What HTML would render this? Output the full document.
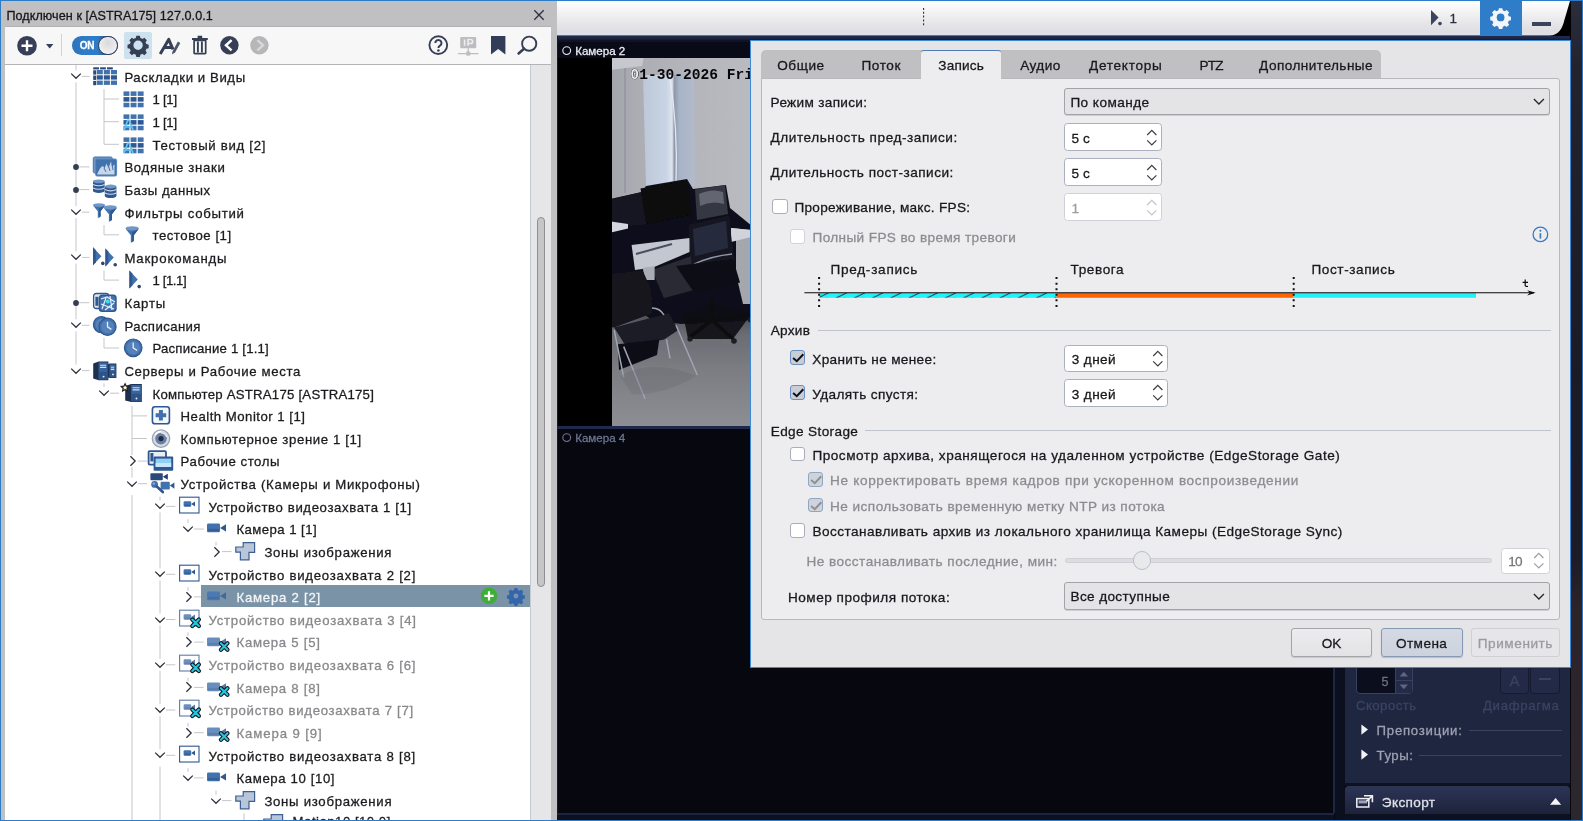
<!DOCTYPE html>
<html><head><meta charset="utf-8"><title>UI</title>
<style>
html,body{margin:0;padding:0;}
body{width:1583px;height:821px;position:relative;overflow:hidden;background:#070812;font-family:"Liberation Sans",sans-serif;}
div,svg,span{position:absolute;box-sizing:border-box;}
.t{white-space:nowrap;display:block;-webkit-text-stroke:0.28px currentColor;}
#root{left:0;top:0;width:1583px;height:821px;will-change:transform;}
svg{overflow:visible;}
</style></head><body><div id="root">
<div style="left:0px;top:0px;width:557px;height:821px;background:#c0c0c2;"></div>
<div style="left:5px;top:27px;width:546px;height:38px;background:#f7f7f8;border-bottom:1px solid #b4b4b8;"></div>
<div style="left:5px;top:26px;width:546px;height:1px;background:#a9a9ac;opacity:.6;"></div>
<div style="left:5px;top:65px;width:526px;height:756px;background:#ffffff;"></div>
<div style="left:530px;top:65px;width:21.4px;height:756px;background:#e6e6e8;border-left:1px solid #c3cad4;"></div>
<div style="left:537px;top:216.5px;width:7.8px;height:370.5px;background:#c6c6c8;border:1px solid #8f8f92;border-radius:4px;"></div>
<span id="t0" class="t" style="left:6.4px;top:5.63px;font-size:12.6px;line-height:20px;color:#15151a;letter-spacing:0.067px;">Подключен к [ASTRA175] 127.0.0.1</span>
<svg style="left:534px;top:10px;" width="10" height="10" viewBox="0 0 10 10"><path d="M0.3 0.3 L9.7 9.7 M9.7 0.3 L0.3 9.7" stroke="#2a2f3e" stroke-width="1.3" fill="none"/></svg>
<svg style="left:17px;top:35.5px;" width="20" height="20" viewBox="0 0 20 20"><circle cx="10" cy="9.8" r="9.8" fill="#363f55"/><path d="M10 4.3v11M4.5 9.8h11" stroke="#fff" stroke-width="2.4"/></svg>
<svg style="left:46px;top:44px;" width="8" height="5" viewBox="0 0 8 5"><path d="M0 0h7.4l-3.7 4.4z" fill="#363f55"/></svg>
<div style="left:61px;top:34px;width:1px;height:22px;background:#d2d2d5;"></div>
<div style="left:72px;top:36px;width:46px;height:18.8px;border-radius:9.4px;background:linear-gradient(90deg,#2d74bd 0%,#2f7cc6 30%,#2f7cc6 55%,#2a5a93 72%,#2a5a93 100%);"></div>
<div style="left:98.4px;top:35.6px;width:19.6px;height:19.6px;border-radius:10px;background:radial-gradient(circle at 50% 35%,#d9d9dd 0%,#ececef 60%,#f8f8fa 100%);border:1.5px solid #363f55;"></div>
<span id="t1" class="t" style="left:79.8px;top:35.73px;font-size:10px;line-height:20px;color:#ffffff;letter-spacing:-0.400px;font-weight:bold;">ON</span>
<div style="left:124px;top:32px;width:28px;height:26.5px;background:#cde2ee;border-radius:2px;"></div>
<svg style="left:124px;top:32px;" width="28" height="27" viewBox="0 0 28 27"><g transform="translate(14.1,13.2) scale(0.92)"><path d="M0 0m-1.9 -10.2h3.8l.6 2.5a7.6 7.6 0 0 1 2.1 .9l2.2-1.4 2.7 2.7-1.4 2.2a7.6 7.6 0 0 1 .9 2.1l2.5 .6v3.8l-2.5 .6a7.6 7.6 0 0 1-.9 2.1l1.4 2.2-2.7 2.7-2.2-1.4a7.6 7.6 0 0 1-2.1 .9l-.6 2.5h-3.8l-.6-2.5a7.6 7.6 0 0 1-2.1-.9l-2.2 1.4-2.7-2.7 1.4-2.2a7.6 7.6 0 0 1-.9-2.1l-2.5-.6v-3.8l2.5-.6a7.6 7.6 0 0 1 .9-2.1l-1.4-2.2 2.7-2.7 2.2 1.4a7.6 7.6 0 0 1 2.1-.9z M0 0m-5.1 0a5.1 5.1 0 1 0 10.2 0a5.1 5.1 0 1 0 -10.2 0z" fill="#363f55" fill-rule="evenodd"/></g></svg>
<svg style="left:158px;top:35px;" width="24" height="20" viewBox="0 0 24 20"><path d="M2.2 18.9 L10.7 4.4 L15 14.4 M5.8 12.4 H14.4" stroke="#363f55" stroke-width="3" fill="none" stroke-linejoin="round"/><path d="M19.9 6.6l2.4 1.3-5.2 9.7-3.1 1.9 .6-3.3z" fill="#4d556b"/></svg>
<svg style="left:192px;top:35.4px;" width="16" height="19.4" viewBox="0 0 16 19.4"><path d="M0 3.1h15.8v1.9H0z M5.6 0.7h4.6v2.2H5.6z" fill="#363f55"/><path d="M2.1 5.4h11.6v12.5a.8 .8 0 0 1-.8 .8H2.9a.8 .8 0 0 1-.8-.8z" fill="none" stroke="#363f55" stroke-width="1.7"/><path d="M5.9 6.5v11M9.9 6.5v11" stroke="#363f55" stroke-width="1.9"/></svg>
<svg style="left:220.2px;top:36px;" width="19" height="19" viewBox="0 0 19 19"><circle cx="9.4" cy="9.3" r="9.2" fill="#363f55"/><path d="M11.6 4.2L6 9.3l5.6 5.1" stroke="#fff" stroke-width="2.5" fill="none" stroke-linejoin="miter"/></svg>
<svg style="left:250.3px;top:36px;" width="19" height="19" viewBox="0 0 19 19"><circle cx="9.4" cy="9.3" r="9.2" fill="#b7b7ba"/><path d="M7.4 4.2L13 9.3l-5.6 5.1" stroke="#d8d8db" stroke-width="2.5" fill="none"/></svg>
<svg style="left:427.5px;top:35px;" width="21" height="21" viewBox="0 0 21 21"><circle cx="10.3" cy="10.1" r="8.9" fill="none" stroke="#363f55" stroke-width="1.9"/><path d="M7.3 8.1a3.1 3.1 0 1 1 4.7 2.6c-1.2 .7-1.6 1.2-1.6 2.4" stroke="#363f55" stroke-width="2" fill="none"/><circle cx="10.4" cy="15.4" r="1.25" fill="#363f55"/></svg>
<svg style="left:457.5px;top:37px;" width="21" height="19" viewBox="0 0 21 19"><rect x="2.2" y="0" width="16" height="11.3" rx="1" fill="#bdbdc0"/><path d="M6.6 2.5v6.3M10 8.8V2.5h2.6a2 2 0 0 1 0 4H10" stroke="#ececee" stroke-width="1.7" fill="none"/><path d="M10.2 11.3v4M0 16.6h20.4" stroke="#bdbdc0" stroke-width="1.3"/><rect x="8.2" y="14.6" width="4" height="4" fill="#bdbdc0"/></svg>
<svg style="left:490.6px;top:36.2px;" width="15" height="19" viewBox="0 0 15 19"><path d="M0 0h14.4v18.6l-7.2-5.6L0 18.6z" fill="#323d5a"/></svg>
<svg style="left:516.5px;top:34.5px;" width="22" height="20" viewBox="0 0 22 20"><circle cx="12.2" cy="8.7" r="7.1" fill="none" stroke="#363f55" stroke-width="1.9"/><path d="M7 13.7L1.6 18.4" stroke="#363f55" stroke-width="2.6" stroke-linecap="round"/></svg>
<svg style="left:0;top:0" width="531" height="821"><g stroke="#c6c6ca" stroke-width="1" fill="none"><path d="M82 76.4H89.5"/><path d="M76 65.0V70.4"/><path d="M76 82.4V87.7"/><path d="M104 99.0H119.0"/><path d="M104 89.2V99.0"/><path d="M104 99.0V110.3"/><path d="M76 87.7V110.3"/><path d="M104 121.7H119.0"/><path d="M104 110.3V121.7"/><path d="M104 121.7V133.0"/><path d="M76 110.3V133.0"/><path d="M104 144.3H119.0"/><path d="M104 133.0V144.3"/><path d="M76 133.0V155.6"/><path d="M79 166.9H89.5"/><path d="M76 155.6V166.9"/><path d="M76 166.9V178.2"/><path d="M79 189.6H89.5"/><path d="M76 178.2V189.6"/><path d="M76 189.6V200.9"/><path d="M82 212.2H89.5"/><path d="M76 200.9V206.2"/><path d="M76 218.2V223.5"/><path d="M104 234.8H119.0"/><path d="M104 225.0V234.8"/><path d="M76 223.5V246.1"/><path d="M82 257.4H89.5"/><path d="M76 246.1V251.4"/><path d="M76 263.4V268.8"/><path d="M104 280.1H119.0"/><path d="M104 270.3V280.1"/><path d="M76 268.8V291.4"/><path d="M79 302.7H89.5"/><path d="M76 291.4V302.7"/><path d="M76 302.7V314.0"/><path d="M82 325.3H89.5"/><path d="M76 314.0V319.3"/><path d="M76 331.3V336.6"/><path d="M104 348.0H119.0"/><path d="M104 338.1V348.0"/><path d="M76 336.6V359.3"/><path d="M82 370.6H89.5"/><path d="M76 359.3V364.6"/><path d="M110 393.2H119.0"/><path d="M104 383.4V387.2"/><path d="M132 415.9H147.0"/><path d="M132 406.0V415.9"/><path d="M132 415.9V427.2"/><path d="M132 438.5H147.0"/><path d="M132 427.2V438.5"/><path d="M132 438.5V449.8"/><path d="M138 461.1H147.0"/><path d="M132 449.8V455.1"/><path d="M132 467.1V472.4"/><path d="M138 483.7H147.0"/><path d="M132 472.4V477.7"/><path d="M166 506.4H175.3"/><path d="M160 496.6V500.4"/><path d="M160 512.4V517.7"/><path d="M132 495.1V517.7"/><path d="M194 529.0H203.7"/><path d="M188 519.2V523.0"/><path d="M132 517.7V540.3"/><path d="M160 517.7V540.3"/><path d="M222 551.6H231.5"/><path d="M216 541.8V545.6"/><path d="M132 540.3V562.9"/><path d="M160 540.3V562.9"/><path d="M166 574.3H175.3"/><path d="M160 562.9V568.3"/><path d="M160 580.3V585.6"/><path d="M132 562.9V585.6"/><path d="M194 596.9H203.7"/><path d="M188 587.1V590.9"/><path d="M132 585.6V608.2"/><path d="M160 585.6V608.2"/><path d="M166 619.5H175.3"/><path d="M160 608.2V613.5"/><path d="M160 625.5V630.8"/><path d="M132 608.2V630.8"/><path d="M194 642.1H203.7"/><path d="M188 632.3V636.1"/><path d="M132 630.8V653.5"/><path d="M160 630.8V653.5"/><path d="M166 664.8H175.3"/><path d="M160 653.5V658.8"/><path d="M160 670.8V676.1"/><path d="M132 653.5V676.1"/><path d="M194 687.4H203.7"/><path d="M188 677.6V681.4"/><path d="M132 676.1V698.7"/><path d="M160 676.1V698.7"/><path d="M166 710.0H175.3"/><path d="M160 698.7V704.0"/><path d="M160 716.0V721.4"/><path d="M132 698.7V721.4"/><path d="M194 732.7H203.7"/><path d="M188 722.9V726.7"/><path d="M132 721.4V744.0"/><path d="M160 721.4V744.0"/><path d="M166 755.3H175.3"/><path d="M160 744.0V749.3"/><path d="M132 744.0V766.6"/><path d="M194 777.9H203.7"/><path d="M188 768.1V771.9"/><path d="M132 766.6V789.2"/><path d="M160 766.6V789.2"/><path d="M222 800.6H231.5"/><path d="M216 790.7V794.6"/><path d="M132 789.2V811.9"/><path d="M160 789.2V811.9"/><path d="M244 823.2H259.7"/><path d="M244 813.4V823.2"/><path d="M132 811.9V834.5"/><path d="M160 811.9V834.5"/></g></svg>
<svg style="left:70px;top:72.4px;" width="12" height="8" viewBox="0 0 12 8"><path d="M1.2 1.6L6 6.3l4.8-4.7" stroke="#2b2f3a" stroke-width="1.25" fill="none"/></svg>
<svg style="left:93px;top:65.80000000000001px;" width="24" height="22" viewBox="0 0 24 22"><rect x="0.2" y="1.3" width="5.8" height="2.1" fill="#2a4a7c"/><rect x="7.1000000000000005" y="1.3" width="5.8" height="2.1" fill="#2a4a7c"/><rect x="14.0" y="1.3" width="5.8" height="2.1" fill="#2a4a7c"/><rect x="0.2" y="4.3" width="2.9" height="4.3" fill="#2a4a7c"/><rect x="0.2" y="9.6" width="2.9" height="4.3" fill="#2a4a7c"/><rect x="0.2" y="14.899999999999999" width="2.9" height="4.3" fill="#2a4a7c"/><rect x="3.7" y="4.0" width="6.1" height="4.3" fill="#4272ad"/><rect x="10.8" y="4.0" width="6.1" height="4.3" fill="#4272ad"/><rect x="17.9" y="4.0" width="6.1" height="4.3" fill="#4272ad"/><rect x="3.7" y="9.3" width="6.1" height="4.3" fill="#2f5790"/><rect x="10.8" y="9.3" width="6.1" height="4.3" fill="#2f5790"/><rect x="17.9" y="9.3" width="6.1" height="4.3" fill="#2f5790"/><rect x="3.7" y="14.6" width="6.1" height="4.3" fill="#4272ad"/><rect x="10.8" y="14.6" width="6.1" height="4.3" fill="#4272ad"/><rect x="17.9" y="14.6" width="6.1" height="4.3" fill="#4272ad"/></svg>
<span id="t2" class="t" style="left:124.4px;top:67.73px;font-size:13.2px;line-height:20px;color:#1b1b1f;letter-spacing:0.575px;">Раскладки и Виды</span>
<svg style="left:122.5px;top:88.43px;" width="24" height="22" viewBox="0 0 24 22"><rect x="0.5" y="3.4" width="5.9" height="4.5" fill="#4272ad"/><rect x="7.6000000000000005" y="3.4" width="5.9" height="4.5" fill="#4272ad"/><rect x="14.700000000000001" y="3.4" width="5.9" height="4.5" fill="#4272ad"/><rect x="0.5" y="9.1" width="5.9" height="4.5" fill="#2f5790"/><rect x="7.6000000000000005" y="9.1" width="5.9" height="4.5" fill="#2f5790"/><rect x="14.700000000000001" y="9.1" width="5.9" height="4.5" fill="#2f5790"/><rect x="0.5" y="14.8" width="5.9" height="4.5" fill="#4272ad"/><rect x="7.6000000000000005" y="14.8" width="5.9" height="4.5" fill="#4272ad"/><rect x="14.700000000000001" y="14.8" width="5.9" height="4.5" fill="#4272ad"/></svg>
<span id="t3" class="t" style="left:152.5px;top:90.36px;font-size:13.2px;line-height:20px;color:#1b1b1f;letter-spacing:-0.274px;">1 [1]</span>
<svg style="left:122.5px;top:111.06px;" width="24" height="22" viewBox="0 0 24 22"><rect x="0.5" y="3.4" width="5.9" height="4.5" fill="#4272ad"/><rect x="7.6000000000000005" y="3.4" width="5.9" height="4.5" fill="#4272ad"/><rect x="14.700000000000001" y="3.4" width="5.9" height="4.5" fill="#4272ad"/><rect x="0.5" y="9.1" width="5.9" height="4.5" fill="#2f5790"/><rect x="7.6000000000000005" y="9.1" width="5.9" height="4.5" fill="#2f5790"/><rect x="14.700000000000001" y="9.1" width="5.9" height="4.5" fill="#2f5790"/><rect x="0.5" y="14.8" width="5.9" height="4.5" fill="#4272ad"/><rect x="7.6000000000000005" y="14.8" width="5.9" height="4.5" fill="#4272ad"/><rect x="14.700000000000001" y="14.8" width="5.9" height="4.5" fill="#4272ad"/><path d="M1 19.3L4.6 9.4h1.8l3.6 9.9M2.6 16h5.8" stroke="#5fc6ee" stroke-width="1.7" fill="none"/></svg>
<span id="t4" class="t" style="left:152.5px;top:112.99px;font-size:13.2px;line-height:20px;color:#1b1b1f;letter-spacing:-0.274px;">1 [1]</span>
<svg style="left:122.5px;top:133.69000000000003px;" width="24" height="22" viewBox="0 0 24 22"><rect x="0.5" y="3.4" width="5.9" height="4.5" fill="#4272ad"/><rect x="7.6000000000000005" y="3.4" width="5.9" height="4.5" fill="#4272ad"/><rect x="14.700000000000001" y="3.4" width="5.9" height="4.5" fill="#4272ad"/><rect x="0.5" y="9.1" width="5.9" height="4.5" fill="#2f5790"/><rect x="7.6000000000000005" y="9.1" width="5.9" height="4.5" fill="#2f5790"/><rect x="14.700000000000001" y="9.1" width="5.9" height="4.5" fill="#2f5790"/><rect x="0.5" y="14.8" width="5.9" height="4.5" fill="#4272ad"/><rect x="7.6000000000000005" y="14.8" width="5.9" height="4.5" fill="#4272ad"/><rect x="14.700000000000001" y="14.8" width="5.9" height="4.5" fill="#4272ad"/><path d="M1 19.3L4.6 9.4h1.8l3.6 9.9M2.6 16h5.8" stroke="#5fc6ee" stroke-width="1.7" fill="none"/></svg>
<span id="t5" class="t" style="left:152.5px;top:135.62px;font-size:13.2px;line-height:20px;color:#1b1b1f;letter-spacing:0.701px;">Тестовый вид [2]</span>
<svg style="left:73px;top:163.92000000000002px;" width="6" height="6" viewBox="0 0 6 6"><circle cx="3" cy="3" r="2.9" fill="#363d50"/></svg>
<svg style="left:93px;top:156.32000000000002px;" width="24" height="22" viewBox="0 0 24 22"><rect x="0.3" y="1" width="19" height="16" rx="1.5" fill="#6f97c8" stroke="#4272ad"/><rect x="2.6" y="3" width="21" height="17" rx="1.5" fill="#4272ad" stroke="#5a86bd" stroke-width="1"/><path d="M4 18.5c2-5 4-8 6-8.5l1.5 2.5 2-5 2 4.5 2.5-6.5 1 5 2.5-2v10z" fill="#dfe7f2" opacity=".85"/><path d="M11 12l2 4M15 9l2 6M19 8l1 6" stroke="#4272ad" stroke-width="1"/></svg>
<span id="t6" class="t" style="left:124.4px;top:158.25px;font-size:13.2px;line-height:20px;color:#1b1b1f;letter-spacing:0.681px;">Водяные знаки</span>
<svg style="left:73px;top:186.55px;" width="6" height="6" viewBox="0 0 6 6"><circle cx="3" cy="3" r="2.9" fill="#363d50"/></svg>
<svg style="left:93px;top:178.95000000000002px;" width="24" height="22" viewBox="0 0 24 22"><g transform="translate(0,0.5)"><rect x="0" y="1.8" width="11.6" height="9.6" fill="#2f5790"/><ellipse cx="5.8" cy="11.4" rx="5.8" ry="2" fill="#2f5790"/><ellipse cx="5.8" cy="1.9" rx="5.8" ry="1.9" fill="#6f97c8"/><path d="M0 5q5.8 2.6 11.6 0M0 8.4q5.8 2.6 11.6 0" stroke="#cfdcee" stroke-width="1.1" fill="none"/></g><g transform="translate(11.8,5.6)"><rect x="0" y="1.8" width="11.6" height="9.6" fill="#2f5790"/><ellipse cx="5.8" cy="11.4" rx="5.8" ry="2" fill="#2f5790"/><ellipse cx="5.8" cy="1.9" rx="5.8" ry="1.9" fill="#6f97c8"/><path d="M0 5q5.8 2.6 11.6 0M0 8.4q5.8 2.6 11.6 0" stroke="#cfdcee" stroke-width="1.1" fill="none"/></g></svg>
<span id="t7" class="t" style="left:124.4px;top:180.88px;font-size:13.2px;line-height:20px;color:#1b1b1f;letter-spacing:0.500px;">Базы данных</span>
<svg style="left:70px;top:208.18px;" width="12" height="8" viewBox="0 0 12 8"><path d="M1.2 1.6L6 6.3l4.8-4.7" stroke="#2b2f3a" stroke-width="1.25" fill="none"/></svg>
<svg style="left:93px;top:201.58px;" width="24" height="22" viewBox="0 0 24 22"><g transform="translate(0,1.2) scale(0.86)"><ellipse cx="7" cy="2.2" rx="7" ry="2.2" fill="#6f97c8"/><path d="M0 2.6 Q7 6 14 2.6 L8.8 9.5 V15.2 L5.6 17.6 V9.5z" fill="#4272ad"/><path d="M7 6v11l1.8-1.4V9.5L14 2.6Q10 5 7 6z" fill="#2f5790"/></g><g transform="translate(10.6,3.2) scale(0.95)"><ellipse cx="7" cy="2.2" rx="7" ry="2.2" fill="#6f97c8"/><path d="M0 2.6 Q7 6 14 2.6 L8.8 9.5 V15.2 L5.6 17.6 V9.5z" fill="#4272ad"/><path d="M7 6v11l1.8-1.4V9.5L14 2.6Q10 5 7 6z" fill="#2f5790"/></g></svg>
<span id="t8" class="t" style="left:124.4px;top:203.51px;font-size:13.2px;line-height:20px;color:#1b1b1f;letter-spacing:0.731px;">Фильтры событий</span>
<svg style="left:122.5px;top:224.21px;" width="24" height="22" viewBox="0 0 24 22"><g transform="translate(2.5,2.2) scale(0.95)"><ellipse cx="7" cy="2.2" rx="7" ry="2.2" fill="#6f97c8"/><path d="M0 2.6 Q7 6 14 2.6 L8.8 9.5 V15.2 L5.6 17.6 V9.5z" fill="#4272ad"/><path d="M7 6v11l1.8-1.4V9.5L14 2.6Q10 5 7 6z" fill="#2f5790"/></g></svg>
<span id="t9" class="t" style="left:152.5px;top:226.14px;font-size:13.2px;line-height:20px;color:#1b1b1f;letter-spacing:0.516px;">тестовое [1]</span>
<svg style="left:70px;top:253.44px;" width="12" height="8" viewBox="0 0 12 8"><path d="M1.2 1.6L6 6.3l4.8-4.7" stroke="#2b2f3a" stroke-width="1.25" fill="none"/></svg>
<svg style="left:93px;top:246.84px;" width="24" height="22" viewBox="0 0 24 22"><path d="M0 0.2l8.4 9-8.4 9z" fill="#4272ad"/><path d="M0 0.2l2.8 3v12l-2.8 3z" fill="#2f5790"/><circle cx="9.8" cy="16.4" r="1.8" fill="#33466a"/><path d="M12.4 1.6l8.4 9-8.4 9z" fill="#4272ad"/><path d="M12.4 1.6l2.8 3v12l-2.8 3z" fill="#2f5790"/><circle cx="22.200000000000003" cy="17.8" r="1.8" fill="#33466a"/></svg>
<span id="t10" class="t" style="left:124.4px;top:248.77px;font-size:13.2px;line-height:20px;color:#1b1b1f;letter-spacing:0.832px;">Макрокоманды</span>
<svg style="left:122.5px;top:269.46999999999997px;" width="24" height="22" viewBox="0 0 24 22"><path d="M6.4 1.4l8.4 9-8.4 9z" fill="#4272ad"/><path d="M6.4 1.4l2.8 3v12l-2.8 3z" fill="#2f5790"/><circle cx="16.200000000000003" cy="17.599999999999998" r="1.8" fill="#33466a"/></svg>
<span id="t11" class="t" style="left:152.5px;top:271.40px;font-size:13.2px;line-height:20px;color:#1b1b1f;letter-spacing:-0.410px;">1 [1.1]</span>
<svg style="left:73px;top:299.7px;" width="6" height="6" viewBox="0 0 6 6"><circle cx="3" cy="3" r="2.9" fill="#363d50"/></svg>
<svg style="left:93px;top:292.09999999999997px;" width="24" height="22" viewBox="0 0 24 22"><rect x="0.6" y="1.5" width="15" height="15" rx="2.5" fill="#dfe7f2" stroke="#2f5790" stroke-width="1.3"/><rect x="2.4" y="4.8" width="3" height="9" fill="#2f5790"/><rect x="6.4" y="3.2" width="16.6" height="16.2" rx="2.8" fill="#4272ad" stroke="#2f5790" stroke-width="1.4"/><path d="M8 7l6-2 8 5M9 17l4-11M12 18l9-7M8 12l13 5M17 4l2 14" stroke="#e9eff7" stroke-width="1.2" fill="none"/><circle cx="14.8" cy="9.6" r="2" fill="#3fe0f5"/></svg>
<span id="t12" class="t" style="left:124.4px;top:294.03px;font-size:13.2px;line-height:20px;color:#1b1b1f;letter-spacing:0.821px;">Карты</span>
<svg style="left:70px;top:321.33px;" width="12" height="8" viewBox="0 0 12 8"><path d="M1.2 1.6L6 6.3l4.8-4.7" stroke="#2b2f3a" stroke-width="1.25" fill="none"/></svg>
<svg style="left:93px;top:314.72999999999996px;" width="24" height="22" viewBox="0 0 24 22"><circle cx="8.4" cy="9.6" r="8" fill="#4272ad" stroke="#2f5790" stroke-width="1.2"/><circle cx="8.4" cy="9.6" r="5.8" fill="#5d88bd" opacity=".7"/><path d="M8.4 5.1V9.6l3.6 2.4" stroke="#e8eef6" stroke-width="1.3" fill="none"/><circle cx="14.5" cy="11.8" r="8.6" fill="#4272ad" stroke="#2f5790" stroke-width="1.2"/><circle cx="14.5" cy="11.8" r="6.3999999999999995" fill="#5d88bd" opacity=".7"/><path d="M14.5 6.700000000000001V11.8l3.87 2.5799999999999996" stroke="#e8eef6" stroke-width="1.3" fill="none"/></svg>
<span id="t13" class="t" style="left:124.4px;top:316.66px;font-size:13.2px;line-height:20px;color:#1b1b1f;letter-spacing:0.398px;">Расписания</span>
<svg style="left:122.5px;top:337.36px;" width="24" height="22" viewBox="0 0 24 22"><circle cx="10.2" cy="10.8" r="8.8" fill="#4272ad" stroke="#2f5790" stroke-width="1.2"/><circle cx="10.2" cy="10.8" r="6.6000000000000005" fill="#5d88bd" opacity=".7"/><path d="M10.2 5.5V10.8l3.9600000000000004 2.64" stroke="#e8eef6" stroke-width="1.3" fill="none"/></svg>
<span id="t14" class="t" style="left:152.5px;top:339.29px;font-size:13.2px;line-height:20px;color:#1b1b1f;letter-spacing:0.187px;">Расписание 1 [1.1]</span>
<svg style="left:70px;top:366.59000000000003px;" width="12" height="8" viewBox="0 0 12 8"><path d="M1.2 1.6L6 6.3l4.8-4.7" stroke="#2b2f3a" stroke-width="1.25" fill="none"/></svg>
<svg style="left:93px;top:359.99px;" width="24" height="22" viewBox="0 0 24 22"><path d="M12.6 5.6L16.488 3.4H23.4V18.0H16.488L12.6 16.4z" fill="#1e3050"/><rect x="16.488" y="4.4" width="6.112000000000001" height="12.799999999999999" fill="#38649e"/><rect x="16.488" y="11.430000000000001" width="6.112000000000001" height="5.7700000000000005" fill="#2d5489"/><path d="M17.887999999999998 7.199999999999999h3.3120000000000007M17.887999999999998 9.4h3.3120000000000007" stroke="#d3dff0" stroke-width="1.1"/><circle cx="19.944000000000003" cy="14.4" r="0.95" fill="#e4ecf7"/><path d="M0.2 3.6L5.672 1.4H15.399999999999999V20.2H5.672L0.2 18.599999999999998z" fill="#1e3050"/><rect x="5.672" y="2.4" width="8.927999999999999" height="17.0" fill="#38649e"/><rect x="5.672" y="11.740000000000002" width="8.927999999999999" height="7.660000000000001" fill="#2d5489"/><path d="M7.071999999999999 5.199999999999999h6.128M7.071999999999999 7.4h6.128" stroke="#d3dff0" stroke-width="1.1"/><circle cx="10.536" cy="16.599999999999998" r="0.95" fill="#e4ecf7"/></svg>
<span id="t15" class="t" style="left:124.4px;top:361.92px;font-size:13.2px;line-height:20px;color:#1b1b1f;letter-spacing:0.650px;">Серверы и Рабочие места</span>
<svg style="left:98px;top:389.22px;" width="12" height="8" viewBox="0 0 12 8"><path d="M1.2 1.6L6 6.3l4.8-4.7" stroke="#2b2f3a" stroke-width="1.25" fill="none"/></svg>
<svg style="left:122.5px;top:382.62px;" width="24" height="22" viewBox="0 0 24 22"><path d="M2.2 3.1L8.176 0.9H18.8V19.099999999999998H8.176L2.2 17.499999999999996z" fill="#1e3050"/><rect x="8.176" y="1.9" width="9.824" height="16.4" fill="#38649e"/><rect x="8.176" y="10.91" width="9.824" height="7.39" fill="#2d5489"/><path d="M9.576 4.7h7.024000000000001M9.576 6.9h7.024000000000001" stroke="#d3dff0" stroke-width="1.1"/><circle cx="13.488000000000003" cy="15.499999999999998" r="0.95" fill="#e4ecf7"/><g transform="translate(-1.6,0.6) scale(0.8)"><path d="M4.6 0.2l1.5 3 3.3.4-2.4 2.3.6 3.3-3-1.6-3 1.6.6-3.3L-.2 3.6l3.3-.4z" fill="#ffd9a0" stroke="#1c1f28" stroke-width="1.5"/><circle cx="4.6" cy="5" r="1.3" fill="#fff"/></g></svg>
<span id="t16" class="t" style="left:152.5px;top:384.55px;font-size:13.2px;line-height:20px;color:#1b1b1f;letter-spacing:0.232px;">Компьютер ASTRA175 [ASTRA175]</span>
<svg style="left:150.5px;top:405.25px;" width="24" height="22" viewBox="0 0 24 22"><rect x="1.4" y="1.8" width="17" height="17" rx="2.6" fill="#f4f7fb" stroke="#2f5790" stroke-width="1.6"/><path d="M9.9 5v10.6M4.6 10.3h10.6" stroke="#4272ad" stroke-width="4"/></svg>
<span id="t17" class="t" style="left:180.6px;top:407.18px;font-size:13.2px;line-height:20px;color:#1b1b1f;letter-spacing:0.485px;">Health Monitor 1 [1]</span>
<svg style="left:150.5px;top:427.88px;" width="24" height="22" viewBox="0 0 24 22"><circle cx="10" cy="10.6" r="8.7" fill="#d8dbe2" stroke="#9aa3b4" stroke-width="1.3"/><circle cx="10" cy="10.6" r="5.8" fill="#6a7fa6"/><circle cx="10" cy="10.6" r="2.6" fill="#1f2c47"/><path d="M10 4.8a5.8 5.8 0 0 1 5.6 4.4" stroke="#e9edf4" stroke-width="1.2" fill="none"/><path d="M4.2 6.8a7 7 0 0 1 6-3.2" stroke="#fff" stroke-width="1.5" fill="none"/></svg>
<span id="t18" class="t" style="left:180.6px;top:429.81px;font-size:13.2px;line-height:20px;color:#1b1b1f;letter-spacing:0.608px;">Компьютерное зрение 1 [1]</span>
<svg style="left:128.5px;top:455.11px;" width="8" height="12" viewBox="0 0 8 12"><path d="M1.4 1.2L6.2 6l-4.8 4.8" stroke="#2b2f3a" stroke-width="1.25" fill="none"/></svg>
<svg style="left:150.5px;top:450.51px;" width="24" height="22" viewBox="0 0 24 22"><rect x="-2.4" y="0.2" width="17.4" height="13.4" rx="1" fill="#e9eef5" stroke="#2f5790" stroke-width="1.8"/><rect x="-0.6" y="2" width="3" height="8.4" fill="#2f5790"/><rect x="2.6" y="5.6" width="19.6" height="14.2" rx="1" fill="#2f5790"/><rect x="4.6" y="7.6" width="15.6" height="8.4" fill="#8fd0f4"/><rect x="4.6" y="12" width="15.6" height="4" fill="#c7e8fb"/></svg>
<span id="t19" class="t" style="left:180.6px;top:452.44px;font-size:13.2px;line-height:20px;color:#1b1b1f;letter-spacing:0.551px;">Рабочие столы</span>
<svg style="left:126px;top:479.74px;" width="12" height="8" viewBox="0 0 12 8"><path d="M1.2 1.6L6 6.3l4.8-4.7" stroke="#2b2f3a" stroke-width="1.25" fill="none"/></svg>
<svg style="left:150.5px;top:473.14px;" width="24" height="22" viewBox="0 0 24 22"><rect x="-0.6" y="0.2" width="12.4" height="7" rx="1" fill="#2a4a7c"/><path d="M11.8 3.7l5-3v6z" fill="#223e6c"/><rect x="9.6" y="8.8" width="9.2" height="7.6" rx="1" fill="#4272ad"/><path d="M18.8 12.6l4.6-3.2v6.4z" fill="#2f5790"/><circle cx="3.6" cy="11.4" r="3.4" fill="#4272ad"/><circle cx="2.8" cy="10.6" r="1.2" fill="#8fb0da"/><path d="M5.8 13.6l6 5.4" stroke="#2f5790" stroke-width="2.7" stroke-linecap="round"/></svg>
<span id="t20" class="t" style="left:180.6px;top:475.07px;font-size:13.2px;line-height:20px;color:#1b1b1f;letter-spacing:0.703px;">Устройства (Камеры и Микрофоны)</span>
<svg style="left:154px;top:502.37px;" width="12" height="8" viewBox="0 0 12 8"><path d="M1.2 1.6L6 6.3l4.8-4.7" stroke="#2b2f3a" stroke-width="1.25" fill="none"/></svg>
<svg style="left:178.8px;top:495.77px;" width="24" height="22" viewBox="0 0 24 22"><rect x="0.6" y="1.2" width="19.4" height="15.8" fill="#fff" stroke="#2f5790" stroke-width="1.1"/><rect x="4.6" y="5.2" width="7.6" height="5.6" rx="1.2" fill="#4272ad"/><path d="M12.2 8l3.8-2.4v4.8z" fill="#2f5790"/><rect x="5.6" y="8.6" width="5.6" height="1.6" fill="#2f5790" opacity=".7"/></svg>
<span id="t21" class="t" style="left:208.4px;top:497.70px;font-size:13.2px;line-height:20px;color:#1b1b1f;letter-spacing:0.611px;">Устройство видеозахвата 1 [1]</span>
<svg style="left:182px;top:525.0px;" width="12" height="8" viewBox="0 0 12 8"><path d="M1.2 1.6L6 6.3l4.8-4.7" stroke="#2b2f3a" stroke-width="1.25" fill="none"/></svg>
<svg style="left:207.2px;top:518.4px;" width="24" height="22" viewBox="0 0 24 22"><rect x="0" y="5.6" width="13" height="8.6" rx="1.2" fill="#4272ad"/><path d="M13 9.899999999999999l6-3.6v7.2z" fill="#2f5790"/><rect x="1" y="10.899999999999999" width="11" height="2.3" fill="#2f5790" opacity=".7"/></svg>
<span id="t22" class="t" style="left:236.5px;top:520.33px;font-size:13.2px;line-height:20px;color:#1b1b1f;letter-spacing:0.423px;">Камера 1 [1]</span>
<svg style="left:212.5px;top:545.63px;" width="8" height="12" viewBox="0 0 8 12"><path d="M1.4 1.2L6.2 6l-4.8 4.8" stroke="#2b2f3a" stroke-width="1.25" fill="none"/></svg>
<svg style="left:235px;top:541.03px;" width="24" height="22" viewBox="0 0 24 22"><path d="M8.2 1.6h11.4v9.8h-5.6v7.4H5.4v-7.6H0.8V6h7.4z" fill="#b7c6d8" stroke="#3e5f8f" stroke-width="1.2"/></svg>
<span id="t23" class="t" style="left:264.4px;top:542.96px;font-size:13.2px;line-height:20px;color:#1b1b1f;letter-spacing:0.706px;">Зоны изображения</span>
<svg style="left:154px;top:570.26px;" width="12" height="8" viewBox="0 0 12 8"><path d="M1.2 1.6L6 6.3l4.8-4.7" stroke="#2b2f3a" stroke-width="1.25" fill="none"/></svg>
<svg style="left:178.8px;top:563.66px;" width="24" height="22" viewBox="0 0 24 22"><rect x="0.6" y="1.2" width="19.4" height="15.8" fill="#fff" stroke="#2f5790" stroke-width="1.1"/><rect x="4.6" y="5.2" width="7.6" height="5.6" rx="1.2" fill="#4272ad"/><path d="M12.2 8l3.8-2.4v4.8z" fill="#2f5790"/><rect x="5.6" y="8.6" width="5.6" height="1.6" fill="#2f5790" opacity=".7"/></svg>
<span id="t24" class="t" style="left:208.4px;top:565.59px;font-size:13.2px;line-height:20px;color:#1b1b1f;letter-spacing:0.760px;">Устройство видеозахвата 2 [2]</span>
<div style="left:201.2px;top:585.3px;width:328.8px;height:21.4px;background:#7b93a6;"></div>
<svg style="left:184.5px;top:590.89px;" width="8" height="12" viewBox="0 0 8 12"><path d="M1.4 1.2L6.2 6l-4.8 4.8" stroke="#2b2f3a" stroke-width="1.25" fill="none"/></svg>
<svg style="left:207.2px;top:586.29px;" width="24" height="22" viewBox="0 0 24 22"><rect x="0" y="5.6" width="13" height="8.6" rx="1.2" fill="#4d79b0"/><path d="M13 9.899999999999999l6-3.6v7.2z" fill="#3f69a2"/><rect x="1" y="10.899999999999999" width="11" height="2.3" fill="#3f69a2" opacity=".7"/></svg>
<span id="t25" class="t" style="left:236.5px;top:588.22px;font-size:13.2px;line-height:20px;color:#f4f6f8;letter-spacing:0.748px;">Камера 2 [2]</span>
<svg style="left:154px;top:615.52px;" width="12" height="8" viewBox="0 0 12 8"><path d="M1.2 1.6L6 6.3l4.8-4.7" stroke="#2b2f3a" stroke-width="1.25" fill="none"/></svg>
<svg style="left:178.8px;top:608.92px;" width="24" height="22" viewBox="0 0 24 22"><g opacity=".78"><rect x="0.6" y="1.2" width="19.4" height="15.8" fill="#fff" stroke="#2f5790" stroke-width="1.1"/><rect x="4.6" y="5.2" width="7.6" height="5.6" rx="1.2" fill="#4272ad"/><path d="M12.2 8l3.8-2.4v4.8z" fill="#2f5790"/><rect x="5.6" y="8.6" width="5.6" height="1.6" fill="#2f5790" opacity=".7"/></g><path d="M13.3 10.5l6.6 6.6M19.9 10.5l-6.6 6.6" stroke="#10151c" stroke-width="4.2" stroke-linecap="round"/><path d="M13.3 10.5l6.6 6.6M19.9 10.5l-6.6 6.6" stroke="#25c6de" stroke-width="2.1" stroke-linecap="round"/></svg>
<span id="t26" class="t" style="left:208.4px;top:610.85px;font-size:13.2px;line-height:20px;color:#88888c;letter-spacing:0.784px;">Устройство видеозахвата 3 [4]</span>
<svg style="left:184.5px;top:636.15px;" width="8" height="12" viewBox="0 0 8 12"><path d="M1.4 1.2L6.2 6l-4.8 4.8" stroke="#2b2f3a" stroke-width="1.25" fill="none"/></svg>
<svg style="left:207.2px;top:631.55px;" width="24" height="22" viewBox="0 0 24 22"><g opacity=".8"><rect x="0" y="5.6" width="13" height="8.6" rx="1.2" fill="#4272ad"/><path d="M13 9.899999999999999l6-3.6v7.2z" fill="#2f5790"/><rect x="1" y="10.899999999999999" width="11" height="2.3" fill="#2f5790" opacity=".7"/></g><path d="M13.9 11.2l6.6 6.6M20.5 11.2l-6.6 6.6" stroke="#10151c" stroke-width="4.2" stroke-linecap="round"/><path d="M13.9 11.2l6.6 6.6M20.5 11.2l-6.6 6.6" stroke="#25c6de" stroke-width="2.1" stroke-linecap="round"/></svg>
<span id="t27" class="t" style="left:236.5px;top:633.48px;font-size:13.2px;line-height:20px;color:#88888c;letter-spacing:0.723px;">Камера 5 [5]</span>
<svg style="left:154px;top:660.78px;" width="12" height="8" viewBox="0 0 12 8"><path d="M1.2 1.6L6 6.3l4.8-4.7" stroke="#2b2f3a" stroke-width="1.25" fill="none"/></svg>
<svg style="left:178.8px;top:654.18px;" width="24" height="22" viewBox="0 0 24 22"><g opacity=".78"><rect x="0.6" y="1.2" width="19.4" height="15.8" fill="#fff" stroke="#2f5790" stroke-width="1.1"/><rect x="4.6" y="5.2" width="7.6" height="5.6" rx="1.2" fill="#4272ad"/><path d="M12.2 8l3.8-2.4v4.8z" fill="#2f5790"/><rect x="5.6" y="8.6" width="5.6" height="1.6" fill="#2f5790" opacity=".7"/></g><path d="M13.3 10.5l6.6 6.6M19.9 10.5l-6.6 6.6" stroke="#10151c" stroke-width="4.2" stroke-linecap="round"/><path d="M13.3 10.5l6.6 6.6M19.9 10.5l-6.6 6.6" stroke="#25c6de" stroke-width="2.1" stroke-linecap="round"/></svg>
<span id="t28" class="t" style="left:208.4px;top:656.11px;font-size:13.2px;line-height:20px;color:#88888c;letter-spacing:0.763px;">Устройство видеозахвата 6 [6]</span>
<svg style="left:184.5px;top:681.41px;" width="8" height="12" viewBox="0 0 8 12"><path d="M1.4 1.2L6.2 6l-4.8 4.8" stroke="#2b2f3a" stroke-width="1.25" fill="none"/></svg>
<svg style="left:207.2px;top:676.81px;" width="24" height="22" viewBox="0 0 24 22"><g opacity=".8"><rect x="0" y="5.6" width="13" height="8.6" rx="1.2" fill="#4272ad"/><path d="M13 9.899999999999999l6-3.6v7.2z" fill="#2f5790"/><rect x="1" y="10.899999999999999" width="11" height="2.3" fill="#2f5790" opacity=".7"/></g><path d="M13.9 11.2l6.6 6.6M20.5 11.2l-6.6 6.6" stroke="#10151c" stroke-width="4.2" stroke-linecap="round"/><path d="M13.9 11.2l6.6 6.6M20.5 11.2l-6.6 6.6" stroke="#25c6de" stroke-width="2.1" stroke-linecap="round"/></svg>
<span id="t29" class="t" style="left:236.5px;top:678.74px;font-size:13.2px;line-height:20px;color:#88888c;letter-spacing:0.723px;">Камера 8 [8]</span>
<svg style="left:154px;top:706.04px;" width="12" height="8" viewBox="0 0 12 8"><path d="M1.2 1.6L6 6.3l4.8-4.7" stroke="#2b2f3a" stroke-width="1.25" fill="none"/></svg>
<svg style="left:178.8px;top:699.4399999999999px;" width="24" height="22" viewBox="0 0 24 22"><g opacity=".78"><rect x="0.6" y="1.2" width="19.4" height="15.8" fill="#fff" stroke="#2f5790" stroke-width="1.1"/><rect x="4.6" y="5.2" width="7.6" height="5.6" rx="1.2" fill="#4272ad"/><path d="M12.2 8l3.8-2.4v4.8z" fill="#2f5790"/><rect x="5.6" y="8.6" width="5.6" height="1.6" fill="#2f5790" opacity=".7"/></g><path d="M13.3 10.5l6.6 6.6M19.9 10.5l-6.6 6.6" stroke="#10151c" stroke-width="4.2" stroke-linecap="round"/><path d="M13.3 10.5l6.6 6.6M19.9 10.5l-6.6 6.6" stroke="#25c6de" stroke-width="2.1" stroke-linecap="round"/></svg>
<span id="t30" class="t" style="left:208.4px;top:701.37px;font-size:13.2px;line-height:20px;color:#88888c;letter-spacing:0.680px;">Устройство видеозахвата 7 [7]</span>
<svg style="left:184.5px;top:726.67px;" width="8" height="12" viewBox="0 0 8 12"><path d="M1.4 1.2L6.2 6l-4.8 4.8" stroke="#2b2f3a" stroke-width="1.25" fill="none"/></svg>
<svg style="left:207.2px;top:722.0699999999999px;" width="24" height="22" viewBox="0 0 24 22"><g opacity=".8"><rect x="0" y="5.6" width="13" height="8.6" rx="1.2" fill="#4272ad"/><path d="M13 9.899999999999999l6-3.6v7.2z" fill="#2f5790"/><rect x="1" y="10.899999999999999" width="11" height="2.3" fill="#2f5790" opacity=".7"/></g><path d="M13.9 11.2l6.6 6.6M20.5 11.2l-6.6 6.6" stroke="#10151c" stroke-width="4.2" stroke-linecap="round"/><path d="M13.9 11.2l6.6 6.6M20.5 11.2l-6.6 6.6" stroke="#25c6de" stroke-width="2.1" stroke-linecap="round"/></svg>
<span id="t31" class="t" style="left:236.5px;top:724.00px;font-size:13.2px;line-height:20px;color:#88888c;letter-spacing:0.882px;">Камера 9 [9]</span>
<svg style="left:154px;top:751.3px;" width="12" height="8" viewBox="0 0 12 8"><path d="M1.2 1.6L6 6.3l4.8-4.7" stroke="#2b2f3a" stroke-width="1.25" fill="none"/></svg>
<svg style="left:178.8px;top:744.6999999999999px;" width="24" height="22" viewBox="0 0 24 22"><rect x="0.6" y="1.2" width="19.4" height="15.8" fill="#fff" stroke="#2f5790" stroke-width="1.1"/><rect x="4.6" y="5.2" width="7.6" height="5.6" rx="1.2" fill="#4272ad"/><path d="M12.2 8l3.8-2.4v4.8z" fill="#2f5790"/><rect x="5.6" y="8.6" width="5.6" height="1.6" fill="#2f5790" opacity=".7"/></svg>
<span id="t32" class="t" style="left:208.4px;top:746.63px;font-size:13.2px;line-height:20px;color:#1b1b1f;letter-spacing:0.753px;">Устройство видеозахвата 8 [8]</span>
<svg style="left:182px;top:773.93px;" width="12" height="8" viewBox="0 0 12 8"><path d="M1.2 1.6L6 6.3l4.8-4.7" stroke="#2b2f3a" stroke-width="1.25" fill="none"/></svg>
<svg style="left:207.2px;top:767.3299999999999px;" width="24" height="22" viewBox="0 0 24 22"><rect x="0" y="5.6" width="13" height="8.6" rx="1.2" fill="#4272ad"/><path d="M13 9.899999999999999l6-3.6v7.2z" fill="#2f5790"/><rect x="1" y="10.899999999999999" width="11" height="2.3" fill="#2f5790" opacity=".7"/></svg>
<span id="t33" class="t" style="left:236.5px;top:769.26px;font-size:13.2px;line-height:20px;color:#1b1b1f;letter-spacing:0.609px;">Камера 10 [10]</span>
<svg style="left:210px;top:796.56px;" width="12" height="8" viewBox="0 0 12 8"><path d="M1.2 1.6L6 6.3l4.8-4.7" stroke="#2b2f3a" stroke-width="1.25" fill="none"/></svg>
<svg style="left:235px;top:789.9599999999999px;" width="24" height="22" viewBox="0 0 24 22"><path d="M8.2 1.6h11.4v9.8h-5.6v7.4H5.4v-7.6H0.8V6h7.4z" fill="#b7c6d8" stroke="#3e5f8f" stroke-width="1.2"/></svg>
<span id="t34" class="t" style="left:264.4px;top:791.89px;font-size:13.2px;line-height:20px;color:#1b1b1f;letter-spacing:0.713px;">Зоны изображения</span>
<svg style="left:263.2px;top:812.5899999999999px;" width="24" height="22" viewBox="0 0 24 22"><path d="M8.2 1.6h11.4v9.8h-5.6v7.4H5.4v-7.6H0.8V6h7.4z" fill="#b7c6d8" stroke="#3e5f8f" stroke-width="1.2"/></svg>
<span id="t35" class="t" style="left:292.6px;top:812.32px;font-size:13.2px;line-height:20px;color:#1b1b1f;letter-spacing:0.488px;">Motion10 [10.0]</span>
<svg style="left:480px;top:587.4px;" width="18" height="18" viewBox="0 0 18 18"><circle cx="9" cy="8.8" r="8.3" fill="#3fae36"/><path d="M9 4.2v9.2M4.4 8.8h9.2" stroke="#fff" stroke-width="2.2"/></svg>
<svg style="left:506px;top:586px;" width="20" height="20" viewBox="0 0 20 20"><g transform="translate(9.9,10) scale(0.78)"><path d="M0 0m-1.9 -10.2h3.8l.6 2.5a7.6 7.6 0 0 1 2.1 .9l2.2-1.4 2.7 2.7-1.4 2.2a7.6 7.6 0 0 1 .9 2.1l2.5 .6v3.8l-2.5 .6a7.6 7.6 0 0 1-.9 2.1l1.4 2.2-2.7 2.7-2.2-1.4a7.6 7.6 0 0 1-2.1 .9l-.6 2.5h-3.8l-.6-2.5a7.6 7.6 0 0 1-2.1-.9l-2.2 1.4-2.7-2.7 1.4-2.2a7.6 7.6 0 0 1-.9-2.1l-2.5-.6v-3.8l2.5-.6a7.6 7.6 0 0 1 .9-2.1l-1.4-2.2 2.7-2.7 2.2 1.4a7.6 7.6 0 0 1 2.1-.9z M0 0m-3.1 0a3.1 3.1 0 1 0 6.2 0a3.1 3.1 0 1 0 -6.2 0z" fill="#3566ab" fill-rule="evenodd"/></g></svg>
<div style="left:557px;top:0px;width:1026px;height:821px;background:#06070f;"></div>
<svg style="left:557px;top:0" width="1026" height="37" viewBox="557 0 1026 37"><defs><linearGradient id="tbg" x1="0" y1="0" x2="0" y2="1"><stop offset="0" stop-color="#ffffff"/><stop offset=".3" stop-color="#f4f4f5"/><stop offset=".65" stop-color="#e6e5e8"/><stop offset=".85" stop-color="#dfdfe4"/><stop offset="1" stop-color="#dde1ea"/></linearGradient></defs><rect x="557" y="0" width="1026" height="37" fill="#000"/><path d="M557 1H1570 L1564.4 20 C1562.5 28 1559 35.6 1549 35.6 H557z" fill="url(#tbg)"/><path d="M923.6 8v18" stroke="#2a2f45" stroke-width="1.1" stroke-dasharray="2 1.8"/></svg>
<svg style="left:1430.6px;top:10.2px;" width="12" height="16" viewBox="0 0 12 16"><path d="M0 0l7.6 7.6L0 15.2z" fill="#3a445c"/><circle cx="9" cy="13.6" r="1.8" fill="#3a445c"/></svg>
<span id="t36" class="t" style="left:1449.6px;top:8.56px;font-size:13.4px;line-height:20px;color:#2c3144;letter-spacing:0.000px;">1</span>
<div style="left:1480px;top:1px;width:41.8px;height:34.6px;background:#2f7dc8;"></div>
<svg style="left:1480px;top:1px;" width="42" height="35" viewBox="0 0 42 35"><g transform="translate(20.6,16.4) scale(0.9)"><path d="M0 0m-1.9 -10.2h3.8l.6 2.5a7.6 7.6 0 0 1 2.1 .9l2.2-1.4 2.7 2.7-1.4 2.2a7.6 7.6 0 0 1 .9 2.1l2.5 .6v3.8l-2.5 .6a7.6 7.6 0 0 1-.9 2.1l1.4 2.2-2.7 2.7-2.2-1.4a7.6 7.6 0 0 1-2.1 .9l-.6 2.5h-3.8l-.6-2.5a7.6 7.6 0 0 1-2.1-.9l-2.2 1.4-2.7-2.7 1.4-2.2a7.6 7.6 0 0 1-.9-2.1l-2.5-.6v-3.8l2.5-.6a7.6 7.6 0 0 1 .9-2.1l-1.4-2.2 2.7-2.7 2.2 1.4a7.6 7.6 0 0 1 2.1-.9z M0 0m-4.3 0a4.3 4.3 0 1 0 8.6 0a4.3 4.3 0 1 0 -8.6 0z" fill="#f4f6f9" fill-rule="evenodd"/></g></svg>
<div style="left:1532.1px;top:21.6px;width:18.8px;height:4px;background:#3a455c;"></div>
<div style="left:557px;top:35.6px;width:1013px;height:6.6px;background:linear-gradient(#222b4b 0%,#1c2340 45%,#0f1324 75%,#10142a 100%);"></div>
<div style="left:557px;top:42px;width:194px;height:16px;background:#080a17;"></div>
<div style="left:557px;top:36px;width:1px;height:785px;background:#141a33;"></div>
<svg style="left:561.6px;top:46.2px;" width="10" height="10" viewBox="0 0 10 10"><circle cx="4.7" cy="4.6" r="3.9" fill="none" stroke="#e6e6ea" stroke-width="1.15"/></svg>
<span id="t37" class="t" style="left:575.2px;top:40.98px;font-size:11.6px;line-height:20px;color:#ececf0;letter-spacing:-0.023px;">Камера 2</span>
<div style="left:558px;top:58px;width:192px;height:368px;background:#000000;"></div>
<div style="left:557px;top:426px;width:776px;height:3.2px;background:#1f2a4a;"></div>
<svg style="left:561.6px;top:433.2px;" width="10" height="10" viewBox="0 0 10 10"><circle cx="4.7" cy="4.6" r="3.9" fill="none" stroke="#6d7690" stroke-width="1.15"/></svg>
<span id="t38" class="t" style="left:575.2px;top:427.78px;font-size:11.6px;line-height:20px;color:#6d7690;letter-spacing:-0.023px;">Камера 4</span>
<div style="left:557px;top:813px;width:777px;height:2.2px;background:#1c2440;"></div>
<div style="left:557px;top:815.2px;width:777px;height:5px;background:#0d101e;"></div>
<div style="left:1333.2px;top:667px;width:1.8px;height:146px;background:#1f2745;"></div>
<div style="left:1335px;top:667px;width:10.4px;height:154px;background:#0c0f1e;"></div>
<div style="left:1345.4px;top:667px;width:225px;height:116.4px;background:#1f2640;"></div>
<div style="left:1355.6px;top:660px;width:57px;height:33.6px;background:#0b0e1d;border:1px solid #39415f;border-radius:0 0 4px 4px;"></div>
<div style="left:1394.6px;top:667px;width:17.4px;height:26px;background:#232b49;border-left:1px solid #39415f;border-radius:0 0 4px 0;"></div>
<div style="left:1394.6px;top:680px;width:17.4px;height:1px;background:#39415f;"></div>
<svg style="left:1398.6px;top:671px;" width="10" height="6" viewBox="0 0 10 6"><path d="M0.6 5.4L4.8 0.8l4.2 4.6z" fill="#5d6582"/></svg>
<svg style="left:1398.6px;top:683.6px;" width="10" height="6" viewBox="0 0 10 6"><path d="M0.6 0.6L4.8 5.2l4.2-4.6z" fill="#5d6582"/></svg>
<span id="t39" class="t" style="left:1381.6px;top:671.63px;font-size:12.6px;line-height:20px;color:#6c7389;letter-spacing:0.000px;">5</span>
<div style="left:1500.4px;top:660px;width:29px;height:33.6px;background:#222a47;border:1px solid #151a30;border-radius:0 0 4px 4px;"></div>
<div style="left:1530.2px;top:660px;width:29.4px;height:33.6px;background:#222a47;border:1px solid #151a30;border-radius:0 0 4px 4px;"></div>
<span id="t40" class="t" style="left:1509.4px;top:671.20px;font-size:15px;line-height:20px;color:#39425f;letter-spacing:0.000px;">A</span>
<div style="left:1538.6px;top:678px;width:12px;height:2px;background:#39425f;"></div>
<span id="t41" class="t" style="left:1356px;top:696.43px;font-size:13.2px;line-height:20px;color:#3a4362;letter-spacing:0.443px;">Скорость</span>
<span id="t42" class="t" style="left:1483px;top:696.43px;font-size:13.2px;line-height:20px;color:#3a4362;letter-spacing:0.669px;">Диафрагма</span>
<svg style="left:1361.4px;top:724.4px;" width="8" height="12" viewBox="0 0 8 12"><path d="M0.4 0.4L7 5.6 0.4 10.8z" fill="#f2f3f6"/></svg>
<span id="t43" class="t" style="left:1376.6px;top:721.43px;font-size:13.2px;line-height:20px;color:#9ea3b3;letter-spacing:0.741px;">Препозиции:</span>
<div style="left:1468.5px;top:730px;width:93.3px;height:1px;background:#39425f;"></div>
<svg style="left:1361.4px;top:749px;" width="8" height="12" viewBox="0 0 8 12"><path d="M0.4 0.4L7 5.6 0.4 10.8z" fill="#f2f3f6"/></svg>
<span id="t44" class="t" style="left:1376.6px;top:745.63px;font-size:13.2px;line-height:20px;color:#9ea3b3;letter-spacing:0.510px;">Туры:</span>
<div style="left:1419.4px;top:754.6px;width:142.4px;height:1px;background:#39425f;"></div>
<div style="left:1345.4px;top:783.4px;width:225px;height:2.8px;background:#0e1120;"></div>
<div style="left:1345.4px;top:786.2px;width:225px;height:28.2px;background:linear-gradient(#2c3554 0%,#262e4c 40%,#1c2239 100%);border-radius:4px 4px 0 0;"></div>
<div style="left:1345.4px;top:814.4px;width:225px;height:6px;background:#0d101e;"></div>
<svg style="left:1356px;top:794.6px;" width="18" height="13" viewBox="0 0 18 13"><rect x="0.8" y="3.6" width="12" height="8.4" fill="none" stroke="#eef0f5" stroke-width="1.5"/><rect x="2.6" y="5.4" width="8.4" height="3" fill="#9aa2ba"/><path d="M8 0.8h8.4v6.4M16.2 1L10.4 6.4" stroke="#eef0f5" stroke-width="1.6" fill="none"/></svg>
<span id="t45" class="t" style="left:1381.8px;top:792.89px;font-size:13.6px;line-height:20px;color:#dfe2ea;letter-spacing:0.360px;">Экспорт</span>
<svg style="left:1550px;top:797.6px;" width="12" height="7" viewBox="0 0 12 7"><path d="M0 6.8L5.6 0l5.6 6.8z" fill="#f4f5f8"/></svg>
<svg style="left:612px;top:58px;overflow:hidden" width="138" height="368" viewBox="0 0 138 368">
<defs>
 <linearGradient id="fl" x1="0" y1="0" x2="0" y2="1"><stop offset="0" stop-color="#24242d"/><stop offset=".14" stop-color="#484952"/><stop offset=".32" stop-color="#6b6c73"/><stop offset=".6" stop-color="#7d7e84"/><stop offset="1" stop-color="#8e8f94"/></linearGradient>
 <linearGradient id="wl" x1="0" y1="0" x2="1" y2="0"><stop offset="0" stop-color="#a3a5ac"/><stop offset=".22" stop-color="#acaeb4"/><stop offset=".6" stop-color="#b4b6bc"/><stop offset="1" stop-color="#b9bbc0"/></linearGradient>
 <linearGradient id="cu" x1="0" y1="0" x2="1" y2="0"><stop offset="0" stop-color="#bcc7d9"/><stop offset=".45" stop-color="#c9d4e4"/><stop offset=".56" stop-color="#dde4ee"/><stop offset=".6" stop-color="#8e98aa"/><stop offset=".7" stop-color="#a7b3c7"/><stop offset="1" stop-color="#b2bbca"/></linearGradient>
 <filter id="bl" x="-5%" y="-5%" width="110%" height="110%"><feGaussianBlur stdDeviation="0.7"/></filter>
 <clipPath id="cc"><rect x="0" y="0" width="138" height="368"/></clipPath>
</defs>
<g clip-path="url(#cc)"><g filter="url(#bl)">
 <rect x="-2" y="-2" width="142" height="260" fill="url(#wl)"/>
 <path d="M-2 -2H32L30 8 -2 12z" fill="#c6c8ce"/>
 <path d="M13 10V135" stroke="#8e9099" stroke-width="1.2"/>
 <path d="M31 17H82L83 128 34 128z" fill="url(#cu)"/>
 <path d="M58 20Q66 70 64 126" stroke="#e6ebf3" stroke-width="1.2" fill="none"/>
 <rect x="-2" y="232" width="142" height="138" fill="url(#fl)"/>
 <!-- dark furniture mass -->
 <path d="M-2 141L30 134 34 128 75 121 81 131 114 127 118 150 140 168V262L69 266 40 262 -2 232z" fill="#11111a"/>
 <path d="M0 141L29.6 134 34.3 166 0 169z" fill="#171722"/>
 <path d="M28.5 130.4L74.8 122.3 80.6 157 34.3 166.3z" fill="#07070d"/>
 <path d="M83 131.6L113 127 116 156 85 162z" fill="#343743"/><path d="M87 136Q100 130 111 134L112 146Q100 142 88 148z" fill="#8a8d98" opacity=".55"/>
 <path d="M40 212L80 198 82 232 52 240z" fill="#2a2b34"/>
 <!-- desk whites -->
 <path d="M-1 163.4L16 166V170.4L-1 174.5z" fill="#d3d6dd"/>
 <path d="M19.6 187L77.5 180V194L41 209.5 23 212z" fill="#c3c7cf"/>
 <path d="M24 196L60 186" stroke="#4b5060" stroke-width="2.2"/>
 <path d="M30.7 210L42.6 208V222H33z" fill="#a9adb6"/>
 <path d="M119 170L139 172V177L119 182z" fill="#c9ccd3"/>
 <path d="M124 178L139 175V246H131L124 216z" fill="#a5a7af"/><path d="M119 170L139 172V179L119 184z" fill="#d0d3da"/>
 <!-- office chair (mesh) -->
 <path d="M77 167L117 158 124 221 81 235z" fill="#181923"/>
 <path d="M81 171L114 163 116 190 83 198z" fill="#2b3144" opacity=".8"/>
 <path d="M82 206Q100 198 120 196M83 214Q101 205 121 203" stroke="#9097a6" stroke-width="1.3" fill="none"/>
 <path d="M64 208L121 200.7 128 224.5 83 236.3z" fill="#0f0f18"/>
 <path d="M71 256L102 246 140 255 121 281 76 281z" fill="#0c0c14" opacity=".92"/>
 <path d="M100 240V262M100 262L78 279M100 262L122 282M100 262L138 257M100 262L72 262" stroke="#08080e" stroke-width="3"/>
 <circle cx="78" cy="281" r="2.6" fill="#1a1a22"/><circle cx="122" cy="283" r="2.8" fill="#1a1a22"/><circle cx="138" cy="262" r="2.4" fill="#1a1a22"/>
 <!-- visitor chair -->
 <path d="M0 216L30.7 212.6 39 231.6 40.2 255.3 2.2 269.6 -1 269z" fill="#14141e"/>
 <path d="M2.2 269.6L56.8 255.3 66.3 272 52.1 281.4 14.1 288.6z" fill="#1a1a25"/>
 <path d="M5.8 286.2L47.3 281.4 45 297 7 312z" fill="#0f0f17"/>
 <path d="M2.2 272L11.7 319.4M11.7 288.6L33.1 340.8M54.5 281.4L58 300.4M64 267.2L85.3 317M40 250Q48 250 52 257" stroke="#9ea4b2" stroke-width="1.5" fill="none"/>
 <path d="M8 318Q40 300 84 318Q50 338 20 336z" fill="#5a5b66" opacity=".22"/>
</g>
<g fill="#ee9a5e"><circle cx="90" cy="46" r=".5"/><circle cx="97" cy="52" r=".5"/><circle cx="104" cy="44" r=".5"/><circle cx="110" cy="58" r=".5"/><circle cx="94" cy="64" r=".5"/><circle cx="101" cy="71" r=".5"/><circle cx="113" cy="76" r=".5"/><circle cx="96" cy="84" r=".5"/><circle cx="106" cy="90" r=".5"/><circle cx="118" cy="66" r=".5"/><circle cx="88" cy="98" r=".5"/><circle cx="121" cy="92" r=".5"/></g>
<text x="18.4" y="20.8" font-family="Liberation Mono, monospace" font-weight="bold" font-size="14.1" fill="#07070a" textLength="140" lengthAdjust="spacingAndGlyphs" xml:space="preserve">01-30-2026 Fri 1</text>
<text x="18.4" y="20.8" font-family="Liberation Mono, monospace" font-weight="bold" font-size="14.1" fill="#ecedf0" stroke="#111" stroke-width=".5" paint-order="stroke">0</text>
</g>
</svg>
<div style="left:750px;top:40.3px;width:821px;height:627.4px;background:#e5e4e7;border:1.2px solid #3c8ad6;border-bottom-width:1px;"></div>
<div style="left:761px;top:50px;width:620px;height:28.6px;background:#c0c0c2;border-radius:5px 5px 0 0;"></div>
<div style="left:761px;top:78px;width:798.6px;height:542px;background:#edecee;border:1px solid #b9b9bd;border-radius:0 3px 3px 3px;"></div>
<div style="left:921.2px;top:50px;width:79.6px;height:29.4px;background:#edecee;border-top:1.6px solid #4d7cb6;border-radius:3px 3px 0 0;"></div>
<span id="t46" class="t" style="left:777.2px;top:56.19px;font-size:13.6px;line-height:20px;color:#18181c;letter-spacing:0.559px;">Общие</span>
<span id="t47" class="t" style="left:861.5px;top:56.19px;font-size:13.6px;line-height:20px;color:#18181c;letter-spacing:0.575px;">Поток</span>
<span id="t48" class="t" style="left:938.3px;top:56.19px;font-size:13.6px;line-height:20px;color:#18181c;letter-spacing:0.198px;">Запись</span>
<span id="t49" class="t" style="left:1020.2px;top:56.19px;font-size:13.6px;line-height:20px;color:#18181c;letter-spacing:0.448px;">Аудио</span>
<span id="t50" class="t" style="left:1089px;top:56.19px;font-size:13.6px;line-height:20px;color:#18181c;letter-spacing:0.720px;">Детекторы</span>
<span id="t51" class="t" style="left:1199.4px;top:56.19px;font-size:13.6px;line-height:20px;color:#18181c;letter-spacing:-0.696px;">PTZ</span>
<span id="t52" class="t" style="left:1259.1px;top:56.19px;font-size:13.6px;line-height:20px;color:#18181c;letter-spacing:0.456px;">Дополнительные</span>
<span id="t53" class="t" style="left:770.6px;top:93.49px;font-size:13.6px;line-height:20px;color:#18181c;letter-spacing:0.322px;">Режим записи:</span>
<div style="left:1064.1px;top:88px;width:485.7px;height:27.4px;background:#e4e3e6;border:1px solid #a2a2a7;border-radius:3px;box-shadow:0 1px 0 #cfcfd3;"></div>
<span id="t54" class="t" style="left:1070.3999999999999px;top:92.79px;font-size:13.6px;line-height:20px;color:#18181c;letter-spacing:0.451px;">По команде</span>
<svg style="left:1532.8px;top:98.3px;" width="12" height="8" viewBox="0 0 12 8"><path d="M0.9 1L5.9 6l5-5" stroke="#26262b" stroke-width="1.3" fill="none"/></svg>
<span id="t55" class="t" style="left:770.6px;top:128.39px;font-size:13.6px;line-height:20px;color:#18181c;letter-spacing:0.550px;">Длительность пред-записи:</span>
<div style="left:1064.1px;top:123.4px;width:98.2px;height:27.8px;background:#ffffff;border:1px solid #aab0c0;border-radius:3.5px;"></div>
<span id="t56" class="t" style="left:1071.5px;top:128.99px;font-size:13.6px;line-height:20px;color:#18181c;letter-spacing:0.086px;">5 с</span>
<svg style="left:1145.8999999999999px;top:127.70000000000002px;" width="12" height="20" viewBox="0 0 12 20"><path d="M1.2 7L5.8 2.4 10.4 7M1.2 12.4L5.8 17l4.6-4.6" stroke="#3c3c42" stroke-width="1.2" fill="none"/></svg>
<span id="t57" class="t" style="left:770.6px;top:163.19px;font-size:13.6px;line-height:20px;color:#18181c;letter-spacing:0.477px;">Длительность пост-записи:</span>
<div style="left:1064.1px;top:158.2px;width:98.2px;height:27.8px;background:#ffffff;border:1px solid #aab0c0;border-radius:3.5px;"></div>
<span id="t58" class="t" style="left:1071.5px;top:163.79px;font-size:13.6px;line-height:20px;color:#18181c;letter-spacing:0.086px;">5 с</span>
<svg style="left:1145.8999999999999px;top:162.5px;" width="12" height="20" viewBox="0 0 12 20"><path d="M1.2 7L5.8 2.4 10.4 7M1.2 12.4L5.8 17l4.6-4.6" stroke="#3c3c42" stroke-width="1.2" fill="none"/></svg>
<div style="left:772.3px;top:199.1px;width:15.3px;height:14.600000000000001px;background:#ffffff;border:1px solid #a9aeba;border-radius:3px;"></div>
<span id="t59" class="t" style="left:794.4px;top:198.09px;font-size:13.6px;line-height:20px;color:#18181c;letter-spacing:0.293px;">Прореживание, макс. FPS:</span>
<div style="left:1064.1px;top:193.4px;width:98.2px;height:27.4px;background:#ffffff;border:1px solid #d0d2da;border-radius:3.5px;"></div>
<span id="t60" class="t" style="left:1071.5px;top:198.79px;font-size:13.6px;line-height:20px;color:#9c9ca1;letter-spacing:0.000px;">1</span>
<svg style="left:1145.8999999999999px;top:197.5px;" width="12" height="20" viewBox="0 0 12 20"><path d="M1.2 7L5.8 2.4 10.4 7M1.2 12.4L5.8 17l4.6-4.6" stroke="#c4c4c8" stroke-width="1.2" fill="none"/></svg>
<div style="left:790.2px;top:229.3px;width:15.3px;height:14.600000000000001px;background:#ffffff;border:1px solid #cfd3dc;border-radius:3px;"></div>
<span id="t61" class="t" style="left:812.5px;top:228.09px;font-size:13.6px;line-height:20px;color:#8c8c91;letter-spacing:0.371px;">Полный FPS во время тревоги</span>
<svg style="left:1532.4px;top:226.2px;" width="17" height="17" viewBox="0 0 17 17"><circle cx="8.4" cy="8.4" r="7.3" fill="none" stroke="#3a7bc0" stroke-width="1.3"/><path d="M8.4 7.2v5.4" stroke="#3a7bc0" stroke-width="1.7"/><circle cx="8.4" cy="4.7" r="1.05" fill="#3a7bc0"/></svg>
<span id="t62" class="t" style="left:830.4px;top:260.39px;font-size:13.6px;line-height:20px;color:#18181c;letter-spacing:0.737px;">Пред-запись</span>
<span id="t63" class="t" style="left:1070.5px;top:260.39px;font-size:13.6px;line-height:20px;color:#18181c;letter-spacing:0.612px;">Тревога</span>
<span id="t64" class="t" style="left:1311.5px;top:260.39px;font-size:13.6px;line-height:20px;color:#18181c;letter-spacing:0.571px;">Пост-запись</span>
<svg style="left:750px;top:260px" width="820" height="60" viewBox="750 260 820 60"><defs><pattern id="hat" width="18.2" height="4.8" patternUnits="userSpaceOnUse" x="819" y="293"><rect width="18.2" height="4.8" fill="#20f3f9"/><path d="M-1.7 5.2L10 -0.4M16.5 5.2L28.2 -0.4" stroke="#23373d" stroke-width="1.05"/></pattern></defs><rect x="819.6" y="293" width="237" height="4.8" fill="url(#hat)"/><rect x="1056.6" y="293" width="237" height="4.8" fill="#ff6602"/><rect x="1293.8" y="293" width="182.2" height="4.8" fill="#22f2f8"/><path d="M804.4 292.8H1534" stroke="#0a0a0c" stroke-width="1.1"/><path d="M1535.6 292.8l-8.4-2.6 2.6 2.6-2.6 2.6z" fill="#0a0a0c"/><path d="M819.1 277.1V307.2M1056.5 277.1V307.2M1293.7 277.1V307.2" stroke="#101014" stroke-width="2" stroke-dasharray="2 3.56"/><path d="M1522.6 282.4h5.4M1525.2 279.6v5.6q0 1.6 2.8 1.2" stroke="#0a0a0c" stroke-width="1.2" fill="none"/></svg>
<span id="t65" class="t" style="left:770.7px;top:321.39px;font-size:13.6px;line-height:20px;color:#18181c;letter-spacing:0.301px;">Архив</span>
<div style="left:817.7px;top:329.6px;width:733px;height:1px;background:#bfc3cb;"></div>
<div style="left:790.1px;top:350.2px;width:15.3px;height:14.8px;background:#c9cdd8;border:1px solid #6a90c2;border-radius:3px;"></div>
<svg style="left:790.1px;top:350.2px;" width="16" height="15" viewBox="0 0 16 15"><path d="M3.1 8L6.8 11.2 13.3 4.3" stroke="#111114" stroke-width="2" fill="none"/></svg>
<span id="t66" class="t" style="left:812.3px;top:349.59px;font-size:13.6px;line-height:20px;color:#18181c;letter-spacing:0.333px;">Хранить не менее:</span>
<div style="left:1064.3px;top:344.7px;width:104.2px;height:27px;background:#ffffff;border:1px solid #aab0c0;border-radius:3.5px;"></div>
<span id="t67" class="t" style="left:1071.7px;top:349.89px;font-size:13.6px;line-height:20px;color:#18181c;letter-spacing:0.410px;">3 дней</span>
<svg style="left:1152.1px;top:348.59999999999997px;" width="12" height="20" viewBox="0 0 12 20"><path d="M1.2 7L5.8 2.4 10.4 7M1.2 12.4L5.8 17l4.6-4.6" stroke="#3c3c42" stroke-width="1.2" fill="none"/></svg>
<div style="left:790.1px;top:385.2px;width:15.3px;height:14.8px;background:#c9cdd8;border:1px solid #6a90c2;border-radius:3px;"></div>
<svg style="left:790.1px;top:385.2px;" width="16" height="15" viewBox="0 0 16 15"><path d="M3.1 8L6.8 11.2 13.3 4.3" stroke="#111114" stroke-width="2" fill="none"/></svg>
<span id="t68" class="t" style="left:812.3px;top:384.69px;font-size:13.6px;line-height:20px;color:#18181c;letter-spacing:0.386px;">Удалять спустя:</span>
<div style="left:1064.3px;top:379.4px;width:104.2px;height:27.2px;background:#ffffff;border:1px solid #aab0c0;border-radius:3.5px;"></div>
<span id="t69" class="t" style="left:1071.7px;top:384.69px;font-size:13.6px;line-height:20px;color:#18181c;letter-spacing:0.410px;">3 дней</span>
<svg style="left:1152.1px;top:383.4px;" width="12" height="20" viewBox="0 0 12 20"><path d="M1.2 7L5.8 2.4 10.4 7M1.2 12.4L5.8 17l4.6-4.6" stroke="#3c3c42" stroke-width="1.2" fill="none"/></svg>
<span id="t70" class="t" style="left:770.7px;top:422.19px;font-size:13.6px;line-height:20px;color:#18181c;letter-spacing:0.372px;">Edge Storage</span>
<div style="left:865.4px;top:430.4px;width:685.3px;height:1px;background:#bfc3cb;"></div>
<div style="left:790.2px;top:446.8px;width:15.3px;height:14.600000000000001px;background:#ffffff;border:1px solid #a9aeba;border-radius:3px;"></div>
<span id="t71" class="t" style="left:812.4px;top:446.39px;font-size:13.6px;line-height:20px;color:#18181c;letter-spacing:0.531px;">Просмотр архива, хранящегося на удаленном устройстве (EdgeStorage Gate)</span>
<div style="left:808px;top:472.2px;width:15.3px;height:14.8px;background:#d0d3dc;border:1px solid #8fa6c6;border-radius:3px;"></div>
<svg style="left:808px;top:472.2px;" width="16" height="15" viewBox="0 0 16 15"><path d="M3.1 8L6.8 11.2 13.3 4.3" stroke="#8f9096" stroke-width="2" fill="none"/></svg>
<span id="t72" class="t" style="left:830.1px;top:471.09px;font-size:13.6px;line-height:20px;color:#8c8c91;letter-spacing:0.651px;">Не корректировать время кадров при ускоренном воспроизведении</span>
<div style="left:808px;top:497.5px;width:15.3px;height:14.8px;background:#d0d3dc;border:1px solid #8fa6c6;border-radius:3px;"></div>
<svg style="left:808px;top:497.5px;" width="16" height="15" viewBox="0 0 16 15"><path d="M3.1 8L6.8 11.2 13.3 4.3" stroke="#8f9096" stroke-width="2" fill="none"/></svg>
<span id="t73" class="t" style="left:830.1px;top:496.99px;font-size:13.6px;line-height:20px;color:#8c8c91;letter-spacing:0.444px;">Не использовать временную метку NTP из потока</span>
<div style="left:790.2px;top:523.4px;width:15.3px;height:14.600000000000001px;background:#ffffff;border:1px solid #a9aeba;border-radius:3px;"></div>
<span id="t74" class="t" style="left:812.4px;top:522.39px;font-size:13.6px;line-height:20px;color:#18181c;letter-spacing:0.467px;">Восстанавливать архив из локального хранилища Камеры (EdgeStorage Sync)</span>
<span id="t75" class="t" style="left:806.4px;top:551.89px;font-size:13.6px;line-height:20px;color:#8c8c91;letter-spacing:0.476px;">Не восстанавливать последние, мин:</span>
<div style="left:1065.2px;top:558.2px;width:426.8px;height:4.6px;background:#dddce0;border:1px solid #d0cfd4;border-radius:3px;"></div>
<div style="left:1133px;top:551.4px;width:18.4px;height:18.4px;background:#e9e8eb;border:1px solid #b4bfce;border-radius:10px;"></div>
<div style="left:1501.4px;top:547.6px;width:48.2px;height:26px;background:#ffffff;border:1px solid #d0d2da;border-radius:3.5px;"></div>
<span id="t76" class="t" style="left:1508.2px;top:552.29px;font-size:13.6px;line-height:20px;color:#77777c;letter-spacing:-0.662px;">10</span>
<svg style="left:1533.2px;top:551.0px;" width="12" height="20" viewBox="0 0 12 20"><path d="M1.2 7L5.8 2.4 10.4 7M1.2 12.4L5.8 17l4.6-4.6" stroke="#9d9da2" stroke-width="1.2" fill="none"/></svg>
<span id="t77" class="t" style="left:788px;top:588.29px;font-size:13.6px;line-height:20px;color:#18181c;letter-spacing:0.495px;">Номер профиля потока:</span>
<div style="left:1064.2px;top:582.1px;width:485.4px;height:27.6px;background:#e4e3e6;border:1px solid #a2a2a7;border-radius:3px;box-shadow:0 1px 0 #cfcfd3;"></div>
<span id="t78" class="t" style="left:1070.5px;top:586.99px;font-size:13.6px;line-height:20px;color:#18181c;letter-spacing:0.363px;">Все доступные</span>
<svg style="left:1532.6px;top:592.5px;" width="12" height="8" viewBox="0 0 12 8"><path d="M0.9 1L5.9 6l5-5" stroke="#26262b" stroke-width="1.3" fill="none"/></svg>
<div style="left:1290.6px;top:628.4px;width:81.9px;height:28.6px;border-radius:3px;background:linear-gradient(#ececee,#e3e2e5);border:1px solid #a4a4a9;box-shadow:0 1px 1px #c6c6ca;"></div>
<span id="t79" class="t" style="left:1321.75px;top:633.89px;font-size:13.6px;line-height:20px;color:#18181c;letter-spacing:-0.020px;">OK</span>
<div style="left:1380.6px;top:628.4px;width:82.1px;height:28.6px;border-radius:3px;background:linear-gradient(#d4d9e3,#cdd3de);border:1px solid #8599b4;box-shadow:0 1px 1px #b9bdc6;"></div>
<span id="t80" class="t" style="left:1395.9499999999998px;top:633.89px;font-size:13.6px;line-height:20px;color:#18181c;letter-spacing:0.436px;">Отмена</span>
<div style="left:1470.7px;top:628.4px;width:89.4px;height:28.6px;border-radius:3px;background:#e6e5e8;border:1px solid #d0d0d4;"></div>
<span id="t81" class="t" style="left:1477.8px;top:633.89px;font-size:13.6px;line-height:20px;color:#9a9a9f;letter-spacing:0.550px;">Применить</span>
<div style="left:1571.2px;top:1px;width:10.8px;height:819px;background:linear-gradient(#2a2d3d 0%,#22232e 8%,#1b1b25 45%,#1d1c26 68%,#2c2329 74%,#2c272e 100%);"></div>
<div style="left:0px;top:0px;width:1583px;height:1px;background:#2c7cc9;"></div>
<div style="left:0px;top:0px;width:1px;height:821px;background:#2c7cc9;"></div>
<div style="left:1582px;top:0px;width:1px;height:821px;background:#2c7cc9;"></div>
<div style="left:0px;top:819.6px;width:1583px;height:1.4px;background:#2c7cc9;"></div>
</div></body></html>
